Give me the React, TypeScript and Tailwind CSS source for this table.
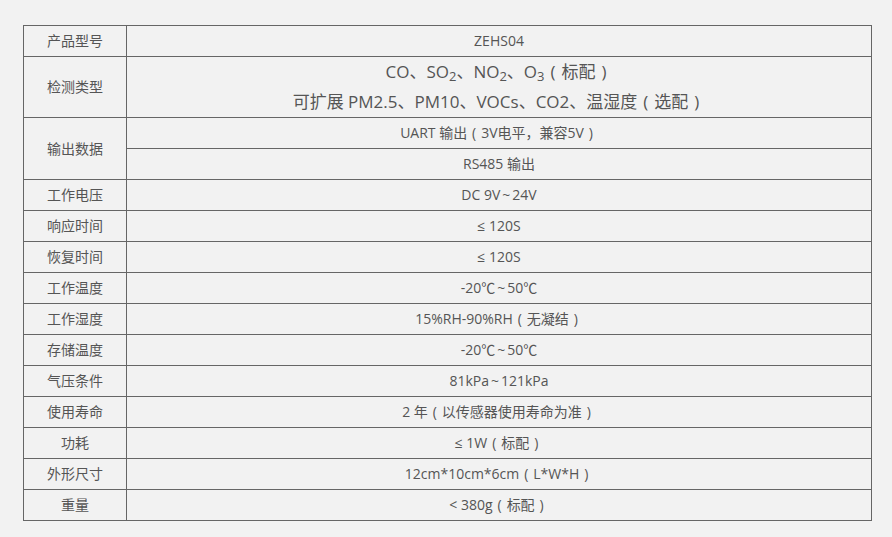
import React from "react";

// YaHei-style punctuation: centred brackets and a narrow tilde
function Txt({ s }: { s: string }) {
  const parts = s.split(/([（）～])/);
  return (
    <>
      {parts.map((p, i) =>
        p === "（" ? (
          <span key={i} className="inline-block w-[1em] text-center">(</span>
        ) : p === "）" ? (
          <span key={i} className="inline-block w-[1em] text-center">)</span>
        ) : p === "～" ? (
          <span key={i} className="mx-[2px]">~</span>
        ) : (
          <React.Fragment key={i}>{p}</React.Fragment>
        )
      )}
    </>
  );
}

const rows = [
  { label: "工作电压", value: "DC 9V～24V" },
  { label: "响应时间", value: "≤ 120S" },
  { label: "恢复时间", value: "≤ 120S" },
  { label: "工作温度", value: "-20℃～50℃" },
  { label: "工作湿度", value: "15%RH-90%RH（无凝结）" },
  { label: "存储温度", value: "-20℃～50℃" },
  { label: "气压条件", value: "81kPa～121kPa" },
  { label: "使用寿命", value: "2 年（以传感器使用寿命为准）" },
  { label: "功耗", value: "≤ 1W（标配）" },
  { label: "外形尺寸", value: "12cm*10cm*6cm（L*W*H）" },
  { label: "重量", value: "< 380g（标配）" },
];

const cell = "border border-[#666] text-center align-middle h-[30px] p-0 leading-[30px]";

export default function App() {
  return (
    <div
      className="min-h-screen bg-[#f2f2f2] pt-[25px] pl-[23px] text-[14px] text-[#555]"
      style={{ fontFamily: '"Open Sans", "Noto Sans CJK SC", sans-serif' }}
    >
      <table className="w-[849px] border-collapse table-fixed">
        <colgroup>
          <col className="w-[103px]" />
          <col />
        </colgroup>
        <tbody>
          <tr>
            <td className={cell}>产品型号</td>
            <td className={cell}>ZEHS04</td>
          </tr>
          <tr>
            <td className={cell}>检测类型</td>
            <td className="border border-[#666] text-center p-0 text-[17px] leading-[30px]">
              <div>
                CO、SO<sub className="text-[13px]">2</sub>、NO<sub className="text-[13px]">2</sub>、O
                <sub className="text-[13px]">3</sub>
                <Txt s="（标配）" />
              </div>
              <div>
                <Txt s="可扩展 PM2.5、PM10、VOCs、CO2、温湿度（选配）" />
              </div>
            </td>
          </tr>
          <tr>
            <td className={cell} rowSpan={2}>
              输出数据
            </td>
            <td className={cell}>
              <Txt s="UART 输出（3V电平，兼容5V）" />
            </td>
          </tr>
          <tr>
            <td className={cell}>RS485 输出</td>
          </tr>
          {rows.map((r) => (
            <tr key={r.label}>
              <td className={cell}>{r.label}</td>
              <td className={cell}>
                <Txt s={r.value} />
              </td>
            </tr>
          ))}
        </tbody>
      </table>
    </div>
  );
}
